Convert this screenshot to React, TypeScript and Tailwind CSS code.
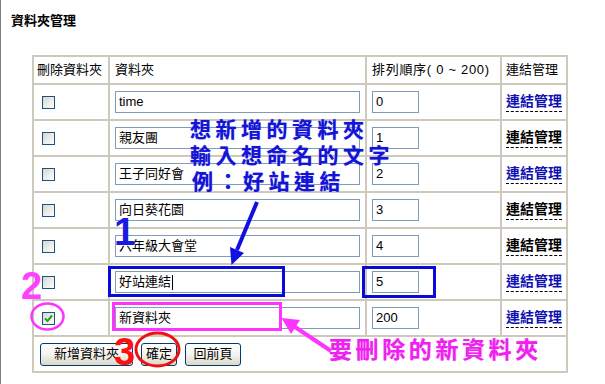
import React from "react";

const rows = [
  { name: "time", order: "0", blue: true, checked: false, caret: false },
  { name: "親友團", order: "1", blue: false, checked: false, caret: false },
  { name: "王子同好會", order: "2", blue: true, checked: false, caret: false },
  { name: "向日葵花園", order: "3", blue: false, checked: false, caret: false },
  { name: "六年級大會堂", order: "4", blue: false, checked: false, caret: false },
  { name: "好站連結", order: "5", blue: true, checked: false, caret: true },
  { name: "新資料夾", order: "200", blue: true, checked: true, caret: false },
];

function Checkbox({ checked }: { checked: boolean }) {
  return (
    <div className="w-[13px] h-[13px] border border-[#1c5180] bg-gradient-to-br from-[#d6d6d0] to-white flex items-center justify-center">
      {checked && (
        <svg width="9" height="9" viewBox="0 0 9 9">
          <path d="M1 4.5 L3.5 7 L8 1.5" fill="none" stroke="#21a121" strokeWidth="2" />
        </svg>
      )}
    </div>
  );
}

function Field({ value, w, caret }: { value: string; w: string; caret?: boolean }) {
  return (
    <div className={`${w} h-[22px] border border-[#7f9db9] bg-white pl-[3px] flex items-center text-[13px] leading-[16px] text-black`}>
      <span>{value}</span>
      {caret && <span className="inline-block w-[1px] h-[15px] bg-black ml-[1px]" />}
    </div>
  );
}

function Btn({ label, w }: { label: string; w: string }) {
  return (
    <div className={`${w} h-[23px] border border-[#003c74] rounded-[3px] bg-gradient-to-b from-white via-[#f4f3ee] to-[#dcd8c8] flex items-center justify-center text-[13px] leading-[16px] text-black`}>
      {label}
    </div>
  );
}

const cell = "border-r-2 border-b-2 border-[#cdc9bd] flex items-center";

export default function App() {
  return (
    <div className="relative w-[605px] h-[384px] bg-white overflow-hidden shadow-[inset_1px_0_0_#808080] font-['Liberation_Sans','Noto_Sans_CJK_TC',sans-serif] text-black">
      <div className="pl-[11px] pt-[13px] text-[13px] leading-[16px] font-bold">資料夾管理</div>

      <div className="ml-[32px] mt-[26px] w-[536px] border-l-2 border-t-2 border-[#cdc9bd] grid grid-cols-[76px_257px_135px_66px] text-[13px] leading-[16px]">
        <div className={`${cell} h-[28px] pl-[3px]`}>刪除資料夾</div>
        <div className={`${cell} h-[28px] pl-[5px]`}>資料夾</div>
        <div className={`${cell} h-[28px] pl-[5px] whitespace-pre tracking-[0.7px]`}>排列順序( 0 ~ 200)</div>
        <div className={`${cell} h-[28px] pl-[4px]`}>連結管理</div>

        {rows.map((r, i) => (
          <React.Fragment key={i}>
            <div className={`${cell} h-[36px] pl-[8px]`}>
              <Checkbox checked={r.checked} />
            </div>
            <div className={`${cell} h-[36px] pl-[5px]`}>
              <Field value={r.name} w="w-[245px]" caret={r.caret} />
            </div>
            <div className={`${cell} h-[36px] pl-[5px]`}>
              <Field value={r.order} w="w-[47px]" />
            </div>
            <div className={`${cell} h-[36px] pl-[4px]`}>
              <span
                className={`text-[14px] leading-[17px] font-bold border-b border-dashed border-black pb-[1px] ${
                  r.blue ? "text-[#1010b4]" : "text-black"
                }`}
              >
                連結管理
              </span>
            </div>
          </React.Fragment>
        ))}

        <div className={`${cell} col-span-4 h-[36px] pl-[6px] gap-2`}>
          <Btn label="新增資料夾" w="w-[93px]" />
          <Btn label="確定" w="w-[36px]" />
          <Btn label="回前頁" w="w-[56px]" />
        </div>
      </div>

      {/* annotation drawings */}
      <svg className="absolute left-0 top-0 pointer-events-none" width="605" height="384" viewBox="0 0 605 384">
        <rect x="109.5" y="267.5" width="174" height="28" fill="none" stroke="#0a0ad8" strokeWidth="3" />
        <rect x="363.5" y="267.5" width="71" height="29" fill="none" stroke="#0a0ad8" strokeWidth="3" />
        <rect x="113.5" y="303.5" width="167" height="26" fill="none" stroke="#ff33ff" strokeWidth="3" />
        <ellipse cx="47.5" cy="316.5" rx="16" ry="13" fill="none" stroke="#ff33ff" strokeWidth="2.5" />
        <ellipse cx="157.5" cy="349.5" rx="21.5" ry="16.5" fill="none" stroke="#ee1111" strokeWidth="3" />
        <line x1="257" y1="202" x2="237" y2="250" stroke="#1010e0" strokeWidth="4" />
        <polygon points="231.5,265 244,253 230,247" fill="#1010e0" />
        <line x1="331" y1="351" x2="295" y2="327" stroke="#ff33ff" strokeWidth="4" />
        <polygon points="281.5,318 300,320 291,334" fill="#ff33ff" />
      </svg>

      {/* annotation texts */}
      <div className="absolute left-[190px] top-[115px] text-[21px] leading-[26px] tracking-[4.5px] font-bold text-[#1414d2] font-['Noto_Sans_CJK_TC',sans-serif] [text-shadow:0_0_1px_#7070ff] whitespace-nowrap">
        <div>想新增的資料夾</div>
        <div>輸入想命名的文字</div>
        <div className="pl-[2px]">例：好站連結</div>
      </div>
      <div className="absolute left-[329px] top-[335px] text-[23px] leading-[26px] tracking-[3.6px] font-bold text-[#ee22ee] font-['Noto_Sans_CJK_TC',sans-serif] [text-shadow:0_0_1px_#ff88ff] whitespace-nowrap">
        要刪除的新資料夾
      </div>
      <div className="absolute left-[114px] top-[213px] text-[38px] leading-[38px] font-bold text-[#1a1ae0] font-['Liberation_Sans',sans-serif]">1</div>
      <div className="absolute left-[21px] top-[267px] text-[38px] leading-[38px] font-bold text-[#ff40ff] font-['Liberation_Sans',sans-serif]">2</div>
      <div className="absolute left-[114px] top-[333px] text-[38px] leading-[38px] font-bold text-[#ff1010] font-['Liberation_Sans',sans-serif]">3</div>
    </div>
  );
}
